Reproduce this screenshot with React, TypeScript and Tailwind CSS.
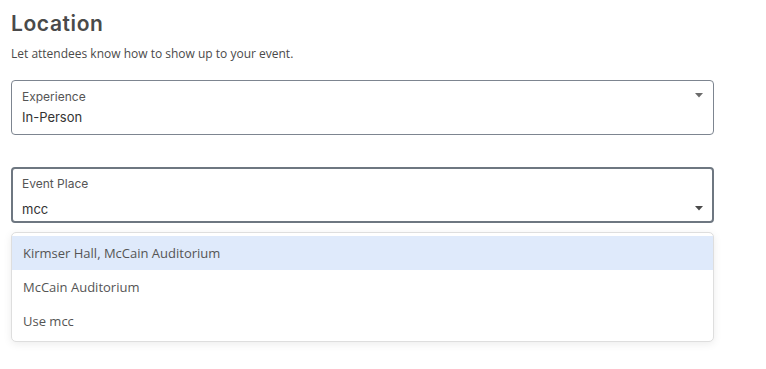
import React from "react";

export default function App() {
  return (
    <div className="w-[766px] h-[369px] bg-white px-[11px] pt-[10px] text-[#333]" style={{ fontFamily: "Inter, 'Noto Sans', sans-serif" }}>
      <h1 className="text-[21px] leading-[28px] font-semibold text-[#4a4a4a] tracking-[0.6px]">Location</h1>
      <p className="text-[12px] leading-[16px] mt-[8px] text-[#4a4a4a]" style={{ fontFamily: "'Open Sans', 'Noto Sans', sans-serif" }}>Let attendees know how to show up to your event.</p>
      <div className="mt-[18px] w-[703px] h-[55px] border border-[#7d8590] rounded-[4px] relative flex flex-col pt-[8px] pl-[10px]">
        <div className="absolute right-[10px] top-[12px]"><svg width="8" height="5" viewBox="0 0 8 5"><path d="M0 0 H8 L4 4.5 Z" fill="#6b6b6b" /></svg></div>
        <span className="text-[12px] leading-[16px] text-[#555]">Experience</span>
        <span className="text-[13px] leading-[20px] mt-[2px] text-[#333]">In-Person</span>
      </div>
      <div className="mt-[32px] w-[703px] h-[56px] border-2 border-[#6e7781] rounded-[4px] relative flex flex-col pt-[7px] pl-[9px]">
        <div className="absolute right-[9px] top-[37px]"><svg width="8" height="5" viewBox="0 0 8 5"><path d="M0 0 H8 L4 4.5 Z" fill="#4a4a4a" /></svg></div>
        <span className="text-[12px] leading-[16px] text-[#555]">Event Place</span>
        <span className="text-[13px] leading-[20px] mt-[7px] text-[#333]">mcc</span>
      </div>
      <div className="mt-[9px] w-[703px] border border-[#dedede] rounded-[5px] shadow-[0_2px_8px_rgba(0,0,0,0.08)] py-[3px] bg-white" style={{ fontFamily: "'Open Sans', 'Noto Sans', sans-serif" }}>
        <div className="h-[34px] flex items-center pt-[1px] px-[11px] bg-[#dfeafb] text-[13px] text-[#555]">Kirmser Hall, McCain Auditorium</div>
        <div className="h-[34px] flex items-center pt-[1px] px-[11px] text-[13px] text-[#555]">McCain Auditorium</div>
        <div className="h-[34px] flex items-center pt-[1px] px-[11px] text-[13px] text-[#555]">Use mcc</div>
      </div>
    </div>
  );
}
